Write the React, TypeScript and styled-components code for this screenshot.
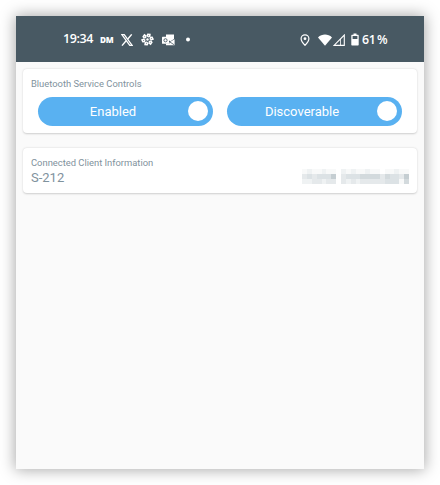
import React from "react";
import styled, { createGlobalStyle } from "styled-components";

const GlobalStyle = createGlobalStyle`
  * { box-sizing: border-box; }
  body { margin: 0; background: #fff; font-family: Roboto, "Liberation Sans", sans-serif; }
`;

const Page = styled.div`
  width: 440px;
  height: 485px;
  padding: 16px;
  overflow: hidden;
`;

const Screen = styled.main`
  width: 408px;
  height: 453px;
  background: #fafafa;
  box-shadow: 0 0 14px 1px rgba(0, 0, 0, 0.34);
`;

const StatusBar = styled.header`
  display: flex;
  justify-content: space-between;
  align-items: center;
  height: 46px;
  padding: 1px 36px 0 47px;
  background: #485963;
  color: #fff;
`;

const StatusGroup = styled.div`
  display: flex;
  align-items: center;
  height: 20px;
  svg { display: block; flex: none; }
`;

const Clock = styled.span`
  width: 37px;
  font: 600 12.5px/18px "Open Sans", sans-serif;
  letter-spacing: -0.4px;
  white-space: nowrap;
  padding-bottom: 2px;
`;

const Carrier = styled.span`
  width: 21px;
  font: 800 8.2px/19px "Open Sans", sans-serif;
  letter-spacing: -0.3px;
`;

const Percent = styled.span`
  width: 26px;
  margin-left: 3px;
  padding-bottom: 1px;
  font: 600 12.3px/19px "Open Sans", sans-serif;
  letter-spacing: -0.4px;
  word-spacing: -1px;
  white-space: nowrap;
`;

const Icon = styled.svg<{ $gap?: number }>`
  margin-right: ${(p) => p.$gap ?? 0}px;
`;

const Content = styled.div`
  display: flex;
  flex-direction: column;
  gap: 15px;
  padding: 7px;
`;

const Card = styled.section<{ $height: number }>`
  height: ${(p) => p.$height}px;
  padding: 8px;
  background: #fff;
  border-radius: 4px;
  box-shadow: 0 0.5px 2px rgba(0, 0, 0, 0.18);
`;

const CardTitle = styled.h2`
  margin: 0;
  font-size: 9.4px;
  line-height: 13px;
  font-weight: 400;
  color: #7f929d;
`;

const ToggleRow = styled.div`
  display: flex;
  gap: 14px;
  padding: 7px 7px 0;
`;

const Toggle = styled.button`
  display: flex;
  align-items: center;
  flex: 1;
  height: 29px;
  padding: 0 5px 0 0;
  border: 0;
  border-radius: 15px;
  background: #59b1f1;
  color: #fff;
  font: 400 13px/29px Roboto, sans-serif;
`;

const ToggleLabel = styled.span`
  flex: 1;
  text-align: center;
`;

const Knob = styled.span`
  width: 20px;
  height: 20px;
  margin-bottom: 1px;
  border-radius: 50%;
  background: #fff;
`;

const ClientRow = styled.div`
  display: flex;
  justify-content: space-between;
  align-items: center;
  height: 17px;
`;

const ClientName = styled.span`
  font-size: 13px;
  line-height: 17px;
  color: #7f929d;
`;

const Mosaic = styled.div`
  display: grid;
  grid-template-columns: repeat(22, 4.86px);
  grid-auto-rows: 4.8px;
  margin: -2px 0 0;
`;

const Cell = styled.i<{ $tone: string }>`
  background: ${(p) => p.$tone};
`;

const tones = ["#fff", "#f8f9f9", "#eff2f3", "#e5e9eb", "#dce2e5", "#d3dadd", "#c5ced2"];
const maskRows = ["1211211021211211011211", "3434446034445555354436", "2233233032323333344415"];

const petalAngles = [0, 60, 120, 180, 240, 300];

export default function App() {
  return (
    <>
      <GlobalStyle />
      <Page>
        <Screen>
          <StatusBar>
            <StatusGroup>
              <Clock>19:34</Clock>
              <Carrier>DM</Carrier>
              <Icon $gap={8} width="12" height="12" viewBox="0 0 12 12" fill="none" stroke="#fff">
                <path d="M.8.6H3.2L11.2 11.4H8.8Z" strokeWidth="1.3" />
                <path d="M10.7.4 6.8 5M5.1 6.8 1 11.6" strokeWidth="1.4" />
              </Icon>
              <Icon $gap={8} width="13" height="13" viewBox="0 0 13 13">
                {petalAngles.map((a) => (
                  <g key={a} transform={`rotate(${a + 15} 6.5 6.5)`}>
                    <path d="M4.8 .8 8.2 .2 8.6 3 6.7 4.5 4.4 3.4Z" fill="#fff" />
                    <circle cx="6.5" cy="2.6" r=".45" fill="#485963" />
                  </g>
                ))}
                <circle cx="6.5" cy="6.5" r="1.2" fill="#fff" />
              </Icon>
              <Icon $gap={11} width="13" height="12" viewBox="0 0 13 12">
                <path d="M4 .5H12V5L8.5 7.2 4 5Z" fill="#fff" />
                <path d="M7.5 8.2 12.6 5.2V11.3H4V9.6H7.5Z" fill="#fff" />
                <path d="m7.6 7.8 4.6 3" stroke="#485963" strokeWidth=".8" />
                <rect x="0" y="2.8" width="7" height="7" rx=".6" fill="#fff" />
                <circle cx="3.5" cy="6.3" r="1.6" fill="none" stroke="#485963" strokeWidth=".9" />
              </Icon>
              <Icon width="5" height="5" viewBox="0 0 5 5"><circle cx="2" cy="2.5" r="2" fill="#fff" /></Icon>
            </StatusGroup>
            <StatusGroup>
              <Icon $gap={8} width="10" height="12" viewBox="0 0 10 12">
                <path d="M5 11.3C2.6 8.8 1.1 6.8 1.1 4.7a3.9 3.9 0 0 1 7.8 0C8.9 6.8 7.4 8.8 5 11.3Z" fill="none" stroke="#fff" strokeWidth="1.2" />
                <circle cx="5" cy="4.7" r="1.4" fill="#fff" />
              </Icon>
              <Icon $gap={1} width="14" height="12" viewBox="0 0 14 12">
                <path d="M0 3.4C4-.4 10-.4 14 3.4L7 11.7Z" fill="#fff" />
              </Icon>
              <Icon $gap={6} width="12" height="12" viewBox="0 0 12 12">
                <path d="M11.3 1V11.4H1Z" fill="none" stroke="#fff" strokeWidth="1.1" />
                <path d="M7.5 5V11" stroke="#fff" strokeWidth=".8" />
              </Icon>
              <Icon width="8" height="13" viewBox="0 0 8 13">
                <path d="M2.5.5h3v1.2H7a.7.7 0 0 1 .7.7v9.4a.7.7 0 0 1-.7.7H1a.7.7 0 0 1-.7-.7V2.4a.7.7 0 0 1 .7-.7h1.5Z" fill="#fff" />
                <path d="M1.6 3H6.4V6H1.6Z" fill="#485963" />
              </Icon>
              <Percent>61 %</Percent>
            </StatusGroup>
          </StatusBar>
          <Content>
            <Card $height={64}>
              <CardTitle>Bluetooth Service Controls</CardTitle>
              <ToggleRow>
                {["Enabled", "Discoverable"].map((label) => (
                  <Toggle key={label} role="switch" aria-checked="true">
                    <ToggleLabel>{label}</ToggleLabel>
                    <Knob />
                  </Toggle>
                ))}
              </ToggleRow>
            </Card>
            <Card $height={45}>
              <CardTitle>Connected Client Information</CardTitle>
              <ClientRow>
                <ClientName>S-212</ClientName>
                <Mosaic>
                  {maskRows.flatMap((row, y) =>
                    row.split("").map((tone, x) => <Cell key={`${y}-${x}`} $tone={tones[Number(tone)]} />)
                  )}
                </Mosaic>
              </ClientRow>
            </Card>
          </Content>
        </Screen>
      </Page>
    </>
  );
}
